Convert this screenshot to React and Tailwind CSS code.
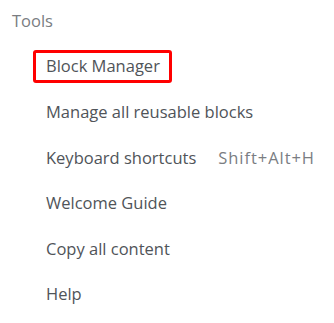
import React from "react";

const items = [
  { label: "Block Manager", focused: true },
  { label: "Manage all reusable blocks" },
  { label: "Keyboard shortcuts", shortcut: "Shift+Alt+H" },
  { label: "Welcome Guide" },
  { label: "Copy all content" },
  { label: "Help" },
];

export default function App() {
  return (
    <div
      className="w-[334px] h-[323px] bg-white overflow-hidden"
      style={{ fontFamily: '"Open Sans", "Noto Sans", sans-serif' }}
    >
      <div className="pl-[12px] pt-[9px] h-[44px] text-[16.5px] leading-[24px] text-[#7a7d82]">
        Tools
      </div>
      <div className="flex flex-col pl-[33px]">
        {items.map((it) => (
          <div key={it.label} className="h-[45.6px] flex items-center">
            <div
              className={
                "h-[33px] flex items-center pl-[10px] pr-[9px] border-[3px] rounded-[3px] text-[16.5px] text-[#505459] " +
                (it.focused ? "border-[#ff0000]" : "border-transparent")
              }
            >
              <span>{it.label}</span>
              {it.shortcut && (
                <span className="ml-[22px] tracking-[0.95px] text-[#7a7d82]">{it.shortcut}</span>
              )}
            </div>
          </div>
        ))}
      </div>
    </div>
  );
}
